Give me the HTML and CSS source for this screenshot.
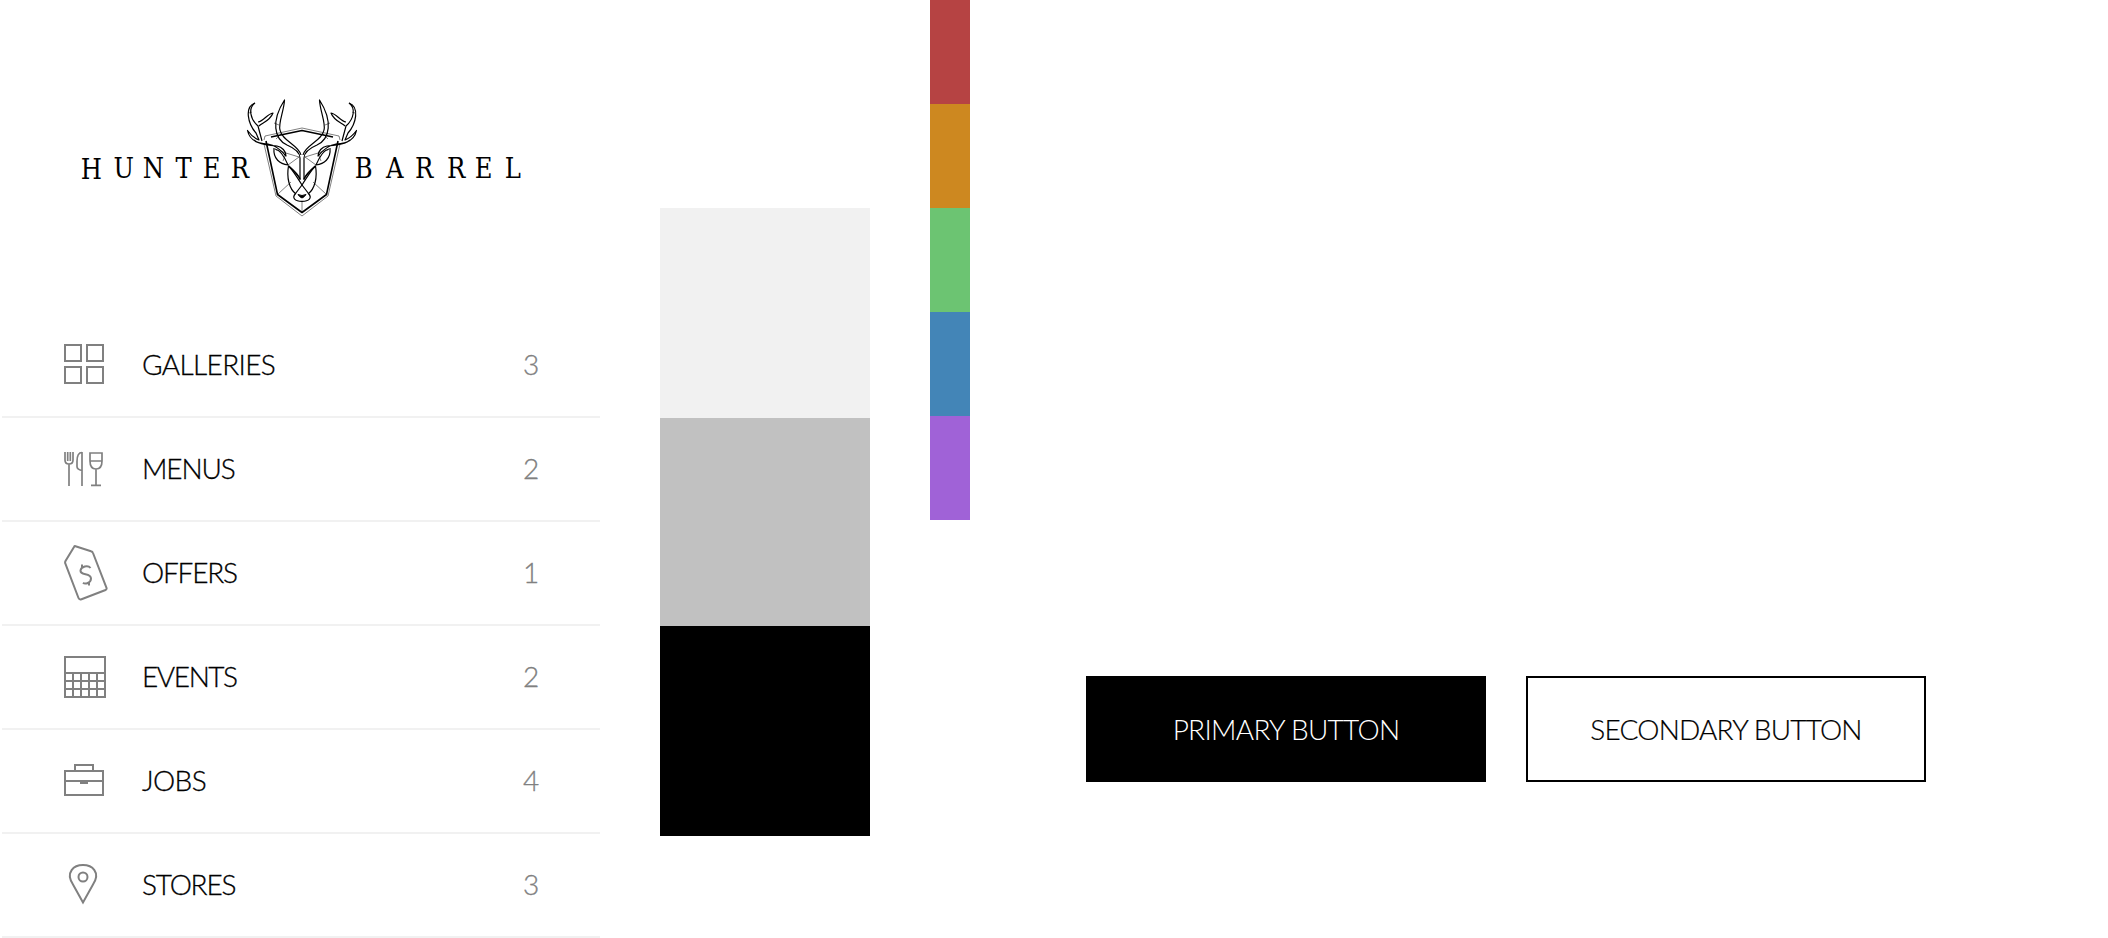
FILE: index.html
```html
<!DOCTYPE html>
<html lang="en">
<head>
<meta charset="utf-8">
<title>Hunter Barrel</title>
<link rel="stylesheet" href="styles.css">
</head>
<body>
<main class="board">
  <section class="sidebar">
    <svg class="logo" width="598" height="314" viewBox="2 0 598 314" role="img" aria-label="Hunter Barrel">
      <g class="wordmark">
        <text y="178.500" x="80.700">H</text>
        <text y="178" x="113.400 142.700 175.500 202.700 230.700">UNTER</text>
        <text y="178" x="354.700 386 414.900 446.900 474.700 504.700">BARREL</text>
      </g>
      <g class="deer">
        <path class="hair" d="M264 140L265 136L302 128L339 136L340 140M264 144L276 196L302 216L328 196L340 144"/>
        <path class="bold" d="M271 137L302 130.500L333 137M266 141L277.500 194.500L302 212.500L326.500 194.500L338 141"/>
        <path class="hair" d="M302 213V201M278 194L291 182M326 194L313 182"/>
        <g id="half">
          <path class="line" d="M300 180V158C300 152 294 148 287 145C274 139 271 121 284.500 100C284 111 278 123 280 130C282 141 299 145 301 155"/>
          <path class="line" d="M255 103C244 107 248 124 256 133L259 140C254 138 250 134 247.500 130.500C250 143 263 145 277 146C282 147 286 151 286 156C281 150 275 145 268 144C262 144 256 142 254 140"/>
          <path class="line" d="M255 103C248 108 250 119 258 126L262 141M258 122C264 121 267 114 273 113C270 121 262 123 259 126"/>
          <path class="hair" d="M274 123L279 125M276 139L281 134M249 113L252 112M276 150L286 153L299 157L288 165M286 153L283 161M287 164L300 178"/>
          <path class="line" d="M274 148C273 159 280 164 288 165C285 158 281 150 275 149"/>
          <path class="line" d="M288.500 166C286.500 177 289 189 296 194"/>
          <path class="line" d="M288.500 166C292 169 297 177 302 185L308.500 193.500C312.500 198 309 201.300 302 201.300"/>
          <path class="bold" d="M288.500 166C292 169 297 173 300 179"/>
        </g>
        <use href="#half" transform="translate(604 0) scale(-1 1)"/>
        <path class="nose" d="M298 194.500Q302 196.500 306 194.500Q304.500 197 302 198Q299.500 197 298 194.500Z"/>
      </g>
    </svg>
    <ul class="menu">
      <li class="row"><svg class="icon" width="44" height="60" viewBox="0 0 44 60"><path d="M1 10h16v16H1zM23 10h16v16H23zM1 32h16v16H1zM23 32h16v16H23z"/></svg><span class="name galleries">GALLERIES</span><span class="count">3</span></li>
      <li class="row"><svg class="icon fine" width="44" height="60" viewBox="0 0 44 60"><path d="M1 13v8q0 4 4 4t4-4v-8M3.700 13v9M6.300 13v9M5 25v22M18 13v34M18 13.500q-5 0-5 9v5q0 3 5 4M26 14h12v8q0 8-6 8t-6-8zM26 22h12M32 30v16M27 46.300h10"/></svg><span class="name menus">MENUS</span><span class="count">2</span></li>
      <li class="row"><svg class="icon" width="44" height="60" viewBox="0 0 44 60"><path d="M11.500 3.200Q10.500 2.900 10 4L1.500 18Q.8 19.500 1.300 20.500L14.500 55Q15.300 57 17.500 56.200L41.500 47Q43 46.200 42.500 44.800L29 10Q28.500 8.500 27 8.200Z"/><path d="M26.500 25C24 21.500 17 23.500 16.500 27.500C16 33 27 29.500 27 35.500C27 40 21 41.500 19 39.800M18 21.500v3M25 38.500v4"/></svg><span class="name offers">OFFERS</span><span class="count">1</span></li>
      <li class="row"><svg class="icon" width="44" height="60" viewBox="0 0 44 60"><path d="M1 10h40v40H1zM1 26h40M1 34h40M1 42h40M9 26v24M17 26v24M25 26v24M33 26v24"/></svg><span class="name events">EVENTS</span><span class="count">2</span></li>
      <li class="row"><svg class="icon" width="44" height="60" viewBox="0 0 44 60"><path d="M1 20h38v24H1zM11 20v-6h18v6M1 30h38M16 32h8"/></svg><span class="name jobs">JOBS</span><span class="count">4</span></li>
      <li class="row"><svg class="icon" width="44" height="60" viewBox="0 0 44 60"><path d="M19 47.500L9 29.500C1 17 10 10 19 10s18 7 10 19.500Z"/><circle cx="19" cy="22" r="4.500"/></svg><span class="name stores">STORES</span><span class="count">3</span></li>
    </ul>
  </section>
  <section class="neutrals"><div class="tone light"></div><div class="tone mid"></div><div class="tone dark"></div></section>
  <section class="accents"><div class="chip red"></div><div class="chip orange"></div><div class="chip green"></div><div class="chip blue"></div><div class="chip purple"></div></section>
  <section class="actions"><button class="btn primary">PRIMARY BUTTON</button><button class="btn secondary">SECONDARY BUTTON</button></section>
</main>
</body>
</html>
```
FILE: styles.css
```css
* { box-sizing: border-box; }
body { margin: 0; background: #fff; font-family: Lato, "Open Sans", sans-serif; font-weight: 300; font-size: 28px; color: #000; }
.board { display: flex; align-items: flex-start; width: 2108px; height: 938px; overflow: hidden; }
.sidebar { width: 598px; margin-left: 2px; }
.logo { display: block; }
.wordmark { font-family: "DejaVu Serif Condensed", "DejaVu Serif", serif; font-stretch: condensed; font-size: 27px; font-weight: 400; }
.deer { fill: none; stroke: #000; stroke-linejoin: round; }
.deer .line { stroke-width: 1.2; }
.deer .bold { stroke-width: 1.6; }
.deer .hair { stroke-width: .5; }
.deer .nose { fill: #000; }
.menu { list-style: none; margin: 0; padding: 0; }
.row { display: flex; align-items: center; height: 104px; padding: 0 59px 0 62px; border-bottom: 2px solid #f1f1f1; }
.icon { fill: none; stroke: #808080; stroke-width: 2; flex: none; }
.icon.fine { stroke-width: 1.7; }
.name { flex: 1; margin-left: 34px; padding-bottom: 2px; white-space: nowrap; line-height: 34px; -webkit-text-stroke: .3px #000; }
.galleries { letter-spacing: -.65px; }
.menus { letter-spacing: -1.1px; }
.offers { letter-spacing: -1.2px; }
.events { letter-spacing: -1.4px; }
.jobs { letter-spacing: -.6px; }
.stores { letter-spacing: -1.2px; }
.count { width: 20px; padding-bottom: 2px; text-align: center; color: #808080; line-height: 34px; -webkit-text-stroke: .3px #808080; }
.neutrals { width: 210px; margin: 208px 0 0 60px; }
.tone { height: 210px; }
.light { background: #f1f1f1; }
.mid { background: #c1c1c1; height: 208px; }
.dark { background: #000; }
.accents { width: 40px; margin-left: 60px; }
.chip { height: 104px; }
.red { background: #b64343; }
.orange { background: #cd8820; }
.green { background: #6cc472; }
.blue { background: #4385b7; }
.purple { background: #a062d7; }
.actions { display: flex; gap: 40px; margin: 676px 0 0 116px; }
.btn { width: 400px; height: 106px; border: 2px solid #000; border-radius: 0; padding: 0; font: inherit; white-space: nowrap; }
.primary { background: #000; color: #fff; letter-spacing: -.7px; }
.secondary { background: #fff; color: #000; letter-spacing: -.8px; -webkit-text-stroke: .2px #000; }
```
